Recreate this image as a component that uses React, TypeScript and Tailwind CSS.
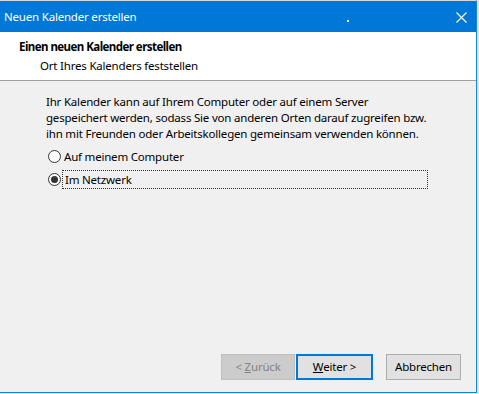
import React from "react";

const font = { fontFamily: '"Noto Sans", "Open Sans", Arial, sans-serif' };

function Radio({ checked }: { checked?: boolean }) {
  return (
    <svg width="13" height="13" viewBox="0 0 13 13" className="shrink-0">
      <circle cx="6.5" cy="6.5" r="6" fill="#ffffff" stroke="#333333" strokeWidth="1" />
      {checked && <circle cx="6.5" cy="6.5" r="3.5" fill="#333333" />}
    </svg>
  );
}

export default function App() {
  return (
    <div className="w-[479px] h-[394px] bg-[#e3e3e3] overflow-hidden text-[11.5px] tracking-[-0.2px] text-black" style={font}>
      <div className="w-[477px] h-[393px] flex flex-col border-t border-t-[#d8d8d8] border-r border-b border-[#1a82d6] bg-[#f0f0f0]">
        {/* Title bar */}
        <div className="h-[31px] shrink-0 bg-[#0078d7] flex items-center relative text-white">
          <span className="pl-[4px] leading-[16px]">Neuen Kalender erstellen</span>
          <span className="absolute left-[347px] top-[19px] w-[2px] h-[2px] bg-white" />
          <svg className="absolute left-[456px] top-[11px]" width="11" height="11" viewBox="0 0 11 11">
            <path d="M0.5 0.5 L10.5 10.5 M10.5 0.5 L0.5 10.5" stroke="#ffffff" strokeWidth="1.1" />
          </svg>
        </div>
        {/* Header */}
        <div className="h-[49px] shrink-0 bg-white border-b border-[#a0a0a0] pl-[19px] pt-[7px] flex flex-col">
          <div className="font-bold leading-[16px] tracking-[-0.55px]">Einen neuen Kalender erstellen</div>
          <div className="pl-[21px] mt-[3px] leading-[16px]">Ort Ihres Kalenders feststellen</div>
        </div>
        {/* Body */}
        <div className="flex-1 flex flex-col pl-[46px] pt-[13px]">
          <div className="leading-[16px] text-[#000]">
            <div>Ihr Kalender kann auf Ihrem Computer oder auf einem Server</div>
            <div>gespeichert werden, sodass Sie von anderen Orten darauf zugreifen bzw.</div>
            <div>ihn mit Freunden oder Arbeitskollegen gemeinsam verwenden können.</div>
          </div>
          <div className="mt-[5px] h-[19px] flex items-center pl-[2px]">
            <Radio />
            <span className="ml-[3px] leading-[16px]">Auf meinem Computer</span>
          </div>
          <div className="mt-[4px] h-[19px] flex items-center pl-[2px]">
            <Radio checked />
            <span className="ml-[1px] w-[366px] h-[19px] flex items-center pl-[2px] border border-dotted border-[#333333] leading-[16px]">
              Im Netzwerk
            </span>
          </div>
          <div className="mt-auto mb-[12px] flex justify-end pr-[15px] gap-[1px]">
            <button className="w-[74px] h-[26px] border border-[#bfbfbf] bg-[#cccccc] text-[#838383] leading-[16px]">
              &lt; <span className="underline">Z</span>urück
            </button>
            <button className="w-[77px] h-[26px] border-2 border-[#0078d7] bg-[#e1e1e1] leading-[16px]">
              <span className="underline">W</span>eiter &gt;
            </button>
            <button className="ml-[12px] w-[75px] h-[26px] border border-[#adadad] bg-[#e1e1e1] leading-[16px]">
              Abbrechen
            </button>
          </div>
        </div>
      </div>
    </div>
  );
}
